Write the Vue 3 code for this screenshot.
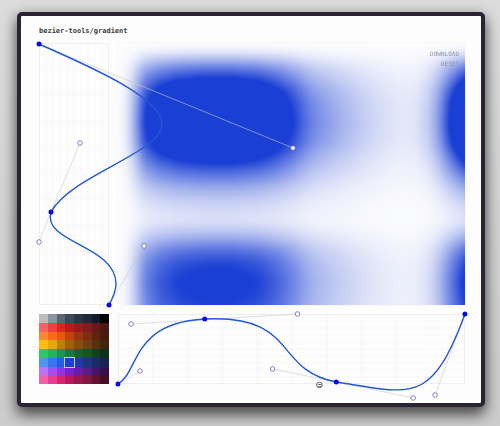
<script setup>
import { onMounted, ref } from 'vue'

const canvas = ref(null)

const palette = [
  ['#bdbdbd', '#8b939f', '#5b6472', '#3d4858', '#2b3442', '#1e2937', '#111a2b', '#000000'],
  ['#f26565', '#f03f40', '#dd2525', '#b91c1c', '#991b1b', '#7f1d1d', '#651a18', '#4d1717'],
  ['#fb8636', '#fa6a16', '#e9560c', '#c2410c', '#97360f', '#7c2d12', '#60230e', '#471c0d'],
  ['#f5c211', '#e0a80a', '#b98109', '#a16207', '#854d0e', '#713f12', '#56300f', '#3f250d'],
  ['#30c565', '#20b653', '#179947', '#177c39', '#15622f', '#14532d', '#103f24', '#0e311d'],
  ['#5095f5', '#3976ee', '#255de5', '#1a3fd4', '#1e3aaa', '#1e3580', '#192b69', '#152450'],
  ['#b875f5', '#a24ef1', '#9132e5', '#7922c7', '#681da5', '#581c83', '#451568', '#34104f'],
  ['#ed62a8', '#e83f8c', '#d92371', '#b9195c', '#99184c', '#801843', '#611333', '#490e27'],
]
const selected = '#1a3fd4'

const horizontal = [[0, 0], [9, .07], [18, .29], [26, .57], [40, .77], [60, .91], [86, .98], [115, .98], [140, .9], [160, .74], [176, .57], [184, .47], [193, .38], [203, .32], [223, .23], [243, .155], [263, .1], [283, .065], [298, .075], [312, .16], [322, .32], [331, .55], [348, 1]]
const vertical = [[0, 0], [6, .06], [14, .28], [24, .68], [35, 1.04], [47, 1.4], [60, 1.64], [80, 1.76], [98, 1.58], [118, 1.06], [130, .76], [145, .43], [160, .23], [174, .15], [182, .2], [194, .42], [207, .76], [220, .98], [237, 1.1], [250, 1.07], [262, 1]]

// Linear interpolation, softened by averaging over a short window.
function interpolate(stops, p) {
  const last = stops[stops.length - 1]
  if (p <= 0) return stops[0][1]
  if (p >= last[0]) return last[1]
  const i = stops.findIndex((s) => s[0] > p)
  const [a, va] = stops[i - 1]
  const [b, vb] = stops[i]
  return va + ((vb - va) * (p - a)) / (b - a)
}
function sample(stops, p) {
  let sum = 0
  for (let k = -4; k <= 4; k++) sum += interpolate(stops, p + k)
  return sum / 9
}

onMounted(() => {
  const el = canvas.value
  const ctx = el.getContext('2d')
  const image = ctx.createImageData(el.width, el.height)
  const xs = Array.from({ length: el.width }, (_, x) => sample(horizontal, x))
  const ys = Array.from({ length: el.height }, (_, y) => sample(vertical, y))
  for (let y = 0; y < el.height; y++) {
    for (let x = 0; x < el.width; x++) {
      const o = (y * el.width + x) * 4
      image.data[o] = 26
      image.data[o + 1] = 63
      image.data[o + 2] = 212
      image.data[o + 3] = Math.min(1, xs[x] * ys[y]) * 255
    }
  }
  ctx.putImageData(image, 0, 0)
})
</script>

<template>
  <main class="desktop">
    <section class="window">
      <h1 class="title">bezier-tools/gradient</h1>
      <div class="workspace">
        <div class="axis">
          <svg class="plot" viewBox="0 0 70 262" preserveAspectRatio="none" role="img" aria-label="Vertical curve">
            <g class="grid">
              <path v-for="n in 9" :key="'v' + n" :d="`M${n * 7} 0V262`" />
              <path v-for="n in 9" :key="'h' + n" :d="`M0 ${n * 26}H70`" />
            </g>
            <rect class="frame" x=".5" y=".5" width="69" height="261" />
            <g class="arm">
              <path d="M0 1L254 105" />
              <path d="M41 100L12 169L0 199" />
              <path d="M70 262L105 203" />
            </g>
            <path class="curve" d="M0 1C47 22 123 54 123 81C123 110 32 132 12 169C3 200 77 202 77 241Q77 249 70 262" />
            <g class="anchor">
              <circle cx="0" cy="1" r="2.5" />
              <circle cx="12" cy="169" r="2.5" />
              <circle cx="70" cy="262" r="2.5" />
            </g>
            <g class="handle">
              <circle cx="254" cy="105" r="2.3" />
              <circle cx="41" cy="100" r="2.3" />
              <circle cx="0" cy="199" r="2.3" />
              <circle cx="105" cy="203" r="2.3" />
            </g>
          </svg>
        </div>
        <div class="preview">
          <canvas ref="canvas" class="canvas" width="348" height="262"></canvas>
          <div class="actions">
            <button type="button">DOWNLOAD</button>
            <button type="button">RESET</button>
          </div>
        </div>
        <div class="palette">
          <template v-for="row in palette">
            <button
              v-for="color in row"
              :key="color"
              type="button"
              class="swatch"
              :class="{ active: color === selected }"
              :style="{ background: color }"
              :aria-label="color"
            ></button>
          </template>
        </div>
        <div class="axis">
          <svg class="plot" viewBox="0 0 348 70" preserveAspectRatio="none" role="img" aria-label="Horizontal curve">
            <g class="grid">
              <path v-for="n in 9" :key="'v' + n" :d="`M${n * 35} 0V70`" />
              <path v-for="n in 9" :key="'h' + n" :d="`M0 ${n * 7}H348`" />
            </g>
            <rect class="frame" x=".5" y=".5" width="347" height="69" />
            <g class="arm">
              <path d="M0 70L22 57" />
              <path d="M13 10L180 0" />
              <path d="M155 55L219 68L296 84" />
              <path d="M348 0L318 81" />
            </g>
            <path class="curve" d="M0 70C22 57 13 9 87 5C181 0 155 56 219 68C296 80 314 91 348 0" />
            <g class="anchor">
              <circle cx="0" cy="70" r="2.5" />
              <circle cx="87" cy="5" r="2.5" />
              <circle cx="219" cy="68" r="2.5" />
              <circle cx="348" cy="0" r="2.5" />
            </g>
            <g class="handle">
              <circle cx="22" cy="57" r="2.3" />
              <circle cx="13" cy="10" r="2.3" />
              <circle cx="180" cy="0" r="2.3" />
              <circle cx="155" cy="55" r="2.3" />
              <circle cx="296" cy="84" r="2.3" />
              <circle cx="318" cy="81" r="2.3" />
            </g>
            <g class="pointer">
              <circle cx="202" cy="71" r="2.8" />
              <path d="M200.5 70.5H204M201 72.5H203.5" />
            </g>
          </svg>
        </div>
      </div>
    </section>
  </main>
</template>

<style>
body {
  margin: 0;
}
</style>

<style scoped>
.desktop {
  box-sizing: border-box;
  min-height: 100vh;
  padding: 12px 15px 20px 17px;
  display: flex;
  overflow: hidden;
  background: linear-gradient(#dcdcdc, #d2d2d2 50%, #cccccc);
}
.window {
  box-sizing: border-box;
  flex: 1;
  min-width: 0;
  display: flex;
  flex-direction: column;
  padding: 9px 16px 19px 18px;
  border: 4px solid #2c2236;
  border-radius: 5px;
  background: #fdfdfe;
  box-shadow: 0 8px 14px rgba(0, 0, 0, .55), 0 2px 14px rgba(0, 0, 0, .25);
}
.title {
  margin: 0 0 6px;
  font: 700 7px/12px "DejaVu Sans Mono", monospace;
  color: #3c3c3e;
}
.workspace {
  flex: 1;
  display: grid;
  grid-template-columns: 70px minmax(0, 1fr);
  grid-template-rows: minmax(0, 1fr) 70px;
  gap: 9px;
}
.axis {
  min-width: 0;
  min-height: 0;
  display: grid;
}
.plot {
  width: 100%;
  height: 100%;
  min-height: 0;
  overflow: visible;
  position: relative;
  z-index: 1;
  fill: none;
  pointer-events: none;
}
.grid {
  stroke: #f7f7f8;
}
.frame {
  stroke: #eeeeef;
}
.arm {
  stroke: #c9c9cd;
  stroke-width: .6;
}
.curve {
  stroke: #2358d6;
  stroke-width: 1.4;
}
.anchor {
  fill: #0808e8;
}
.handle {
  fill: #fff;
  stroke: #6660b8;
  stroke-width: .8;
}
.pointer {
  fill: #fff;
  stroke: #444;
  stroke-width: .8;
}
.preview {
  position: relative;
  min-height: 0;
  display: grid;
  box-shadow: 0 0 0 1px #f8f8f9;
}
.canvas {
  width: 100%;
  height: 100%;
  min-height: 0;
}
.actions {
  position: absolute;
  top: 6px;
  right: 6px;
  display: flex;
  flex-direction: column;
  align-items: flex-end;
}
.actions button {
  padding: 0;
  border: 0;
  background: none;
  font: 6px/10px "DejaVu Sans Mono", monospace;
  color: #8f929c;
}
.palette {
  display: grid;
  grid-template-columns: repeat(8, 1fr);
  grid-template-rows: repeat(8, 1fr);
}
.swatch {
  min-width: 0;
  padding: 0;
  border: 0;
}
.swatch.active {
  outline: 1px solid #c4cbe0;
  z-index: 1;
}
</style>
